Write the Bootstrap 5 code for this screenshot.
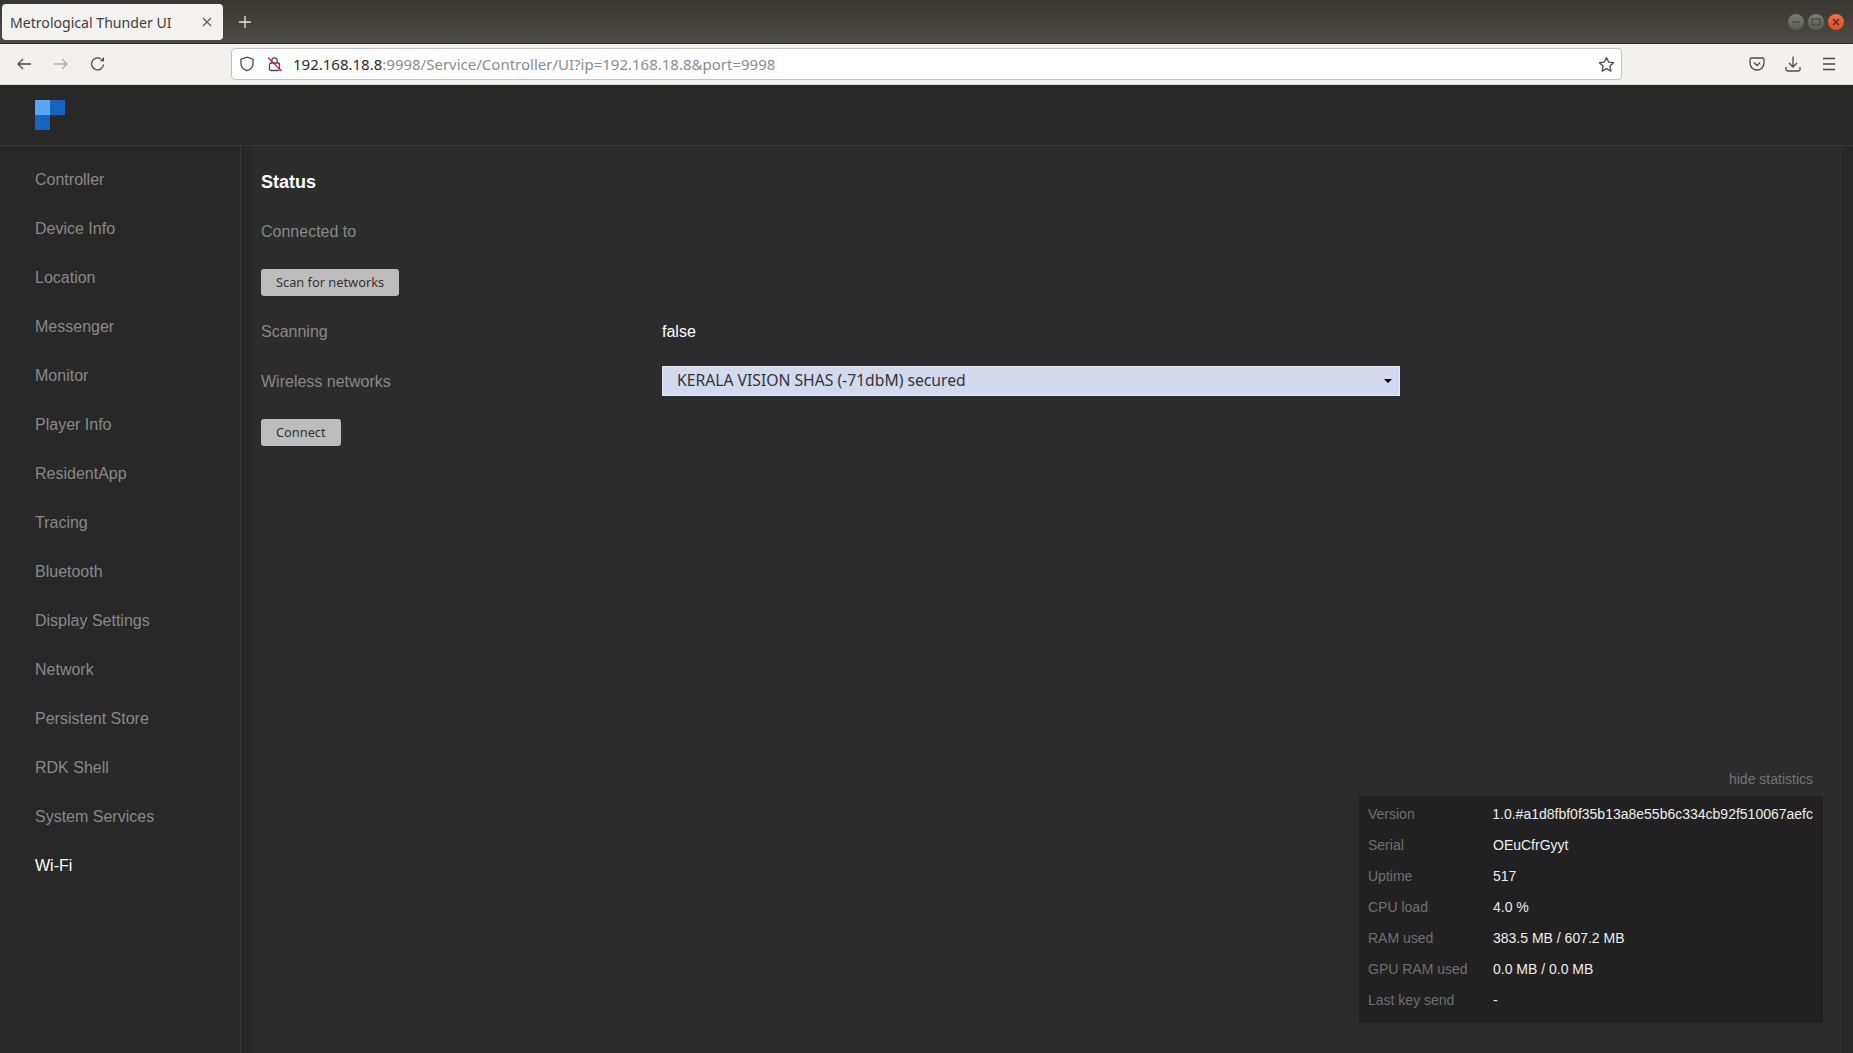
<!DOCTYPE html>
<html lang="en">
<head>
<meta charset="utf-8">
<title>Metrological Thunder UI</title>
<link href="https://cdn.jsdelivr.net/npm/bootstrap@5.3.0/dist/css/bootstrap.min.css" rel="stylesheet">
<style>
html,body{height:100%;overflow:hidden}
body{background:#282828;font-family:"Liberation Sans",Arial,sans-serif;font-size:16px;color:#fff}
.shell{height:1053px}
.chrome-font{font-family:"Noto Sans","Open Sans",sans-serif}
.titlebar{height:44px;background:linear-gradient(#383733,#4c4b45);border-bottom:1px solid #2b2a28}
.tabitem{width:221px;height:36px;margin:4px 0 0 2px;background:#f3f2f0;border-radius:4px;color:#3d3d42;font-size:14.1px;padding:0 11px 0 8px}
.tabtext{padding-top:2px}
.tabx{margin-left:auto}
.newtab{margin-left:16px}
.winbtns{margin-right:9px;gap:4px;margin-left:auto}
.winbtn{width:16px;height:16px;border-radius:50%;background:linear-gradient(#7b7b76,#5b5b57)}
.winbtn.closer{background:linear-gradient(#f4734a,#df4a1c)}
.toolbar{height:41px;background:#f2f1ef;border-bottom:1px solid #d8d6d2}
.tbicons{width:231px;padding-left:16px;gap:21px}
.urlbar{width:1391px;height:32px;background:#fff;border:1px solid #c4c2be;border-radius:4px;font-size:15px;color:#8b8b8f;padding:0 6px 0 7px}
.urlhost{color:#2a2a2e}
.urltext{padding-top:1px}
.urlicons{gap:12px;margin-right:10px}
.tbright{gap:18px;margin-left:auto;margin-right:15px}
.pocket{margin-right:1px}
.apphead{height:61px;background:#282828;border-bottom:1px solid #383838;padding:15px 0 0 35px}
.logogrid{width:30px;height:30px;display:grid;grid-template-columns:15px 15px;grid-template-rows:15px 15px}
.lg-a{background:#5aa6f4}.lg-b{background:#1764c0}
.sidemenu{width:241px;flex:none;background:#282828;border-right:1px solid #383838;padding-top:9px}
.sideitem{display:block;height:49px;line-height:49px;padding-left:35px;color:#888;text-decoration:none}
.sideitem.on{color:#fff}
.mainarea{background:#2c2c2c;padding:0 10px 0 0;margin-left:11px;margin-right:11px;min-width:0}
.rowline{padding-left:9px}
.statustitle{font-size:18px;font-weight:700;color:#fff;margin:25px 0 0;line-height:22px}
.fieldrow{height:50px}
.firstrow{margin-top:14px}
.btnrow{height:50px}
.fieldlab{width:401px;color:#888}
.fieldval{color:#fff}
.grybtn{background:#bdbdbd;color:#333;border:0;border-radius:3px;height:27px;font-size:12.8px;padding:0 15px;line-height:27px}
.wifi-select{width:738px;height:30px;margin-bottom:2px;background:#d3d9ef;border:1px solid #e8e8f0;color:#333;font-size:15.7px;padding:0 7px 0 14px}
.caret{width:0;height:0;border-left:4px solid transparent;border-right:4px solid transparent;border-top:4px solid #000;margin-left:auto}
.hidelink{color:#747474;font-size:14px;line-height:16px;margin-right:19px}
.statpanel{background:#212121;width:464px;padding:3px 10px 0 9px;margin:9px 9px 30px 0;align-self:flex-end;font-size:14px;height:227px}
.statrow{height:31px}
.statlab{width:125px;color:#707070}
.statval{color:#eee}
.fillzone{min-height:0}
</style>
</head>
<body>
<div class="shell d-flex flex-column">
  <div class="titlebar d-flex chrome-font">
    <div class="tabitem d-flex align-items-center">
      <span class="tabtext">Metrological Thunder UI</span>
      <svg class="tabx" width="10" height="10" viewBox="0 0 10 10"><path d="M1 1l8 8M9 1l-8 8" stroke="#555" stroke-width="1.1"/></svg>
    </div>
    <svg class="newtab align-self-center" width="12" height="12" viewBox="0 0 12 12"><path d="M6 0v12M0 6h12" stroke="#e6e6e6" stroke-width="1.3"/></svg>
    <div class="winbtns d-flex align-items-center">
      <div class="winbtn d-flex align-items-center justify-content-center"><svg width="10" height="10" viewBox="0 0 10 10"><path d="M1 5h8" stroke="#3c3c3a" stroke-width="1"/></svg></div>
      <div class="winbtn d-flex align-items-center justify-content-center"><svg width="10" height="10" viewBox="0 0 10 10"><rect x="1" y="2" width="8" height="6" fill="none" stroke="#3c3c3a"/></svg></div>
      <div class="winbtn closer d-flex align-items-center justify-content-center"><svg width="10" height="10" viewBox="0 0 10 10"><path d="M2 2l6 6M8 2l-6 6" stroke="#3a2a20" stroke-width="1.2"/></svg></div>
    </div>
  </div>
  <div class="toolbar d-flex align-items-center chrome-font">
    <div class="tbicons d-flex align-items-center">
      <svg width="16" height="16" viewBox="0 0 16 16" fill="none" stroke="#4a4a4f" stroke-width="1.3"><path d="M15 8H2M7 3L2 8l5 5"/></svg>
      <svg width="16" height="16" viewBox="0 0 16 16" fill="none" stroke="#b0b0b2" stroke-width="1.3"><path d="M1 8h13M9 3l5 5-5 5"/></svg>
      <svg width="16" height="16" viewBox="0 0 16 16" fill="none" stroke="#4a4a4f" stroke-width="1.3"><path d="M13.5 8.5A6 6 0 1 1 11 3"/><path d="M14 1L9.800 5.200H14z" fill="#4a4a4f" stroke="none"/></svg>
    </div>
    <div class="urlbar d-flex align-items-center">
      <div class="urlicons d-flex align-items-center">
        <svg width="16" height="16" viewBox="0 0 16 16" fill="none" stroke="#4a4a4f" stroke-width="1.3"><path d="M8 1.200l6 2v4.500c0 3.500-2.600 5.800-6 7-3.400-1.200-6-3.500-6-7V3.200z"/></svg>
        <svg width="16" height="16" viewBox="0 0 16 16" fill="none"><rect x="2.500" y="7" width="10" height="7.500" rx="1.500" stroke="#4a4a4f" stroke-width="1.300"/><path d="M4.800 7V4.500a2.700 2.700 0 0 1 5.400 0V7" stroke="#4a4a4f" stroke-width="1.300"/><path d="M1 1.500l13.500 13.500" stroke="#e0134f" stroke-width="1.300"/></svg>
      </div>
      <span class="urltext"><span class="urlhost">192.168.18.8</span>:9998/Service/Controller/UI?ip=192.168.18.8&amp;port=9998</span>
      <svg class="ms-auto" width="17" height="17" viewBox="0 0 17 17" fill="none" stroke="#4a4a4f" stroke-width="1.300"><path d="M8.500 1.500l2.100 4.600 5 .6-3.700 3.400 1 5-4.400-2.500-4.400 2.500 1-5L1.400 6.700l5-.6z" stroke-linejoin="round"/></svg>
    </div>
    <div class="tbright d-flex align-items-center">
      <svg class="pocket" width="16" height="16" viewBox="0 0 16 16" fill="none" stroke="#4a4a4f" stroke-width="1.300"><path d="M2.500 2h11A1.500 1.500 0 0 1 15 3.500V7A7 7 0 0 1 1 7V3.500A1.500 1.500 0 0 1 2.500 2z"/><path d="M5 6.500l3 3 3-3"/></svg>
      <svg width="18" height="18" viewBox="0 0 18 18" fill="none" stroke="#4a4a4f" stroke-width="1.300"><path d="M9 1.500v10M5 8l4 4 4-4M2 12v2.500A1.500 1.500 0 0 0 3.500 16h11a1.500 1.500 0 0 0 1.500-1.500V12"/></svg>
      <svg width="18" height="18" viewBox="0 0 18 18" fill="none" stroke="#4a4a4f" stroke-width="1.300"><path d="M3 3.500h12M3 9h12M3 14.500h12"/></svg>
    </div>
  </div>
  <div class="apphead">
    <div class="logogrid"><div class="lg-a"></div><div class="lg-b"></div><div class="lg-b"></div></div>
  </div>
  <div class="d-flex flex-grow-1 fillzone">
    <nav class="sidemenu">
      <a class="sideitem" href="#">Controller</a>
      <a class="sideitem" href="#">Device Info</a>
      <a class="sideitem" href="#">Location</a>
      <a class="sideitem" href="#">Messenger</a>
      <a class="sideitem" href="#">Monitor</a>
      <a class="sideitem" href="#">Player Info</a>
      <a class="sideitem" href="#">ResidentApp</a>
      <a class="sideitem" href="#">Tracing</a>
      <a class="sideitem" href="#">Bluetooth</a>
      <a class="sideitem" href="#">Display Settings</a>
      <a class="sideitem" href="#">Network</a>
      <a class="sideitem" href="#">Persistent Store</a>
      <a class="sideitem" href="#">RDK Shell</a>
      <a class="sideitem" href="#">System Services</a>
      <a class="sideitem on" href="#">Wi-Fi</a>
    </nav>
    <main class="mainarea flex-grow-1 d-flex flex-column">
      <div class="rowline">
        <h2 class="statustitle">Status</h2>
        <div class="fieldrow firstrow d-flex align-items-center"><div class="fieldlab">Connected to</div></div>
        <div class="btnrow d-flex align-items-center"><button class="grybtn chrome-font">Scan for networks</button></div>
        <div class="fieldrow d-flex align-items-center"><div class="fieldlab">Scanning</div><div class="fieldval">false</div></div>
        <div class="fieldrow d-flex align-items-center"><div class="fieldlab">Wireless networks</div>
          <div class="wifi-select d-flex align-items-center chrome-font"><span>KERALA VISION SHAS (-71dbM) secured</span><span class="caret"></span></div>
        </div>
        <div class="btnrow d-flex align-items-center"><button class="grybtn chrome-font">Connect</button></div>
      </div>
      <div class="mt-auto d-flex flex-column">
        <div class="hidelink text-end">hide statistics</div>
        <div class="statpanel">
          <div class="statrow d-flex align-items-center"><div class="statlab">Version</div><div class="statval">1.0.#a1d8fbf0f35b13a8e55b6c334cb92f510067aefc</div></div>
          <div class="statrow d-flex align-items-center"><div class="statlab">Serial</div><div class="statval">OEuCfrGyyt</div></div>
          <div class="statrow d-flex align-items-center"><div class="statlab">Uptime</div><div class="statval">517</div></div>
          <div class="statrow d-flex align-items-center"><div class="statlab">CPU load</div><div class="statval">4.0 %</div></div>
          <div class="statrow d-flex align-items-center"><div class="statlab">RAM used</div><div class="statval">383.5 MB / 607.2 MB</div></div>
          <div class="statrow d-flex align-items-center"><div class="statlab">GPU RAM used</div><div class="statval">0.0 MB / 0.0 MB</div></div>
          <div class="statrow d-flex align-items-center"><div class="statlab">Last key send</div><div class="statval">-</div></div>
        </div>
      </div>
    </main>
  </div>
</div>
<script src="https://cdn.jsdelivr.net/npm/bootstrap@5.3.0/dist/js/bootstrap.bundle.min.js"></script>
</body>
</html>
